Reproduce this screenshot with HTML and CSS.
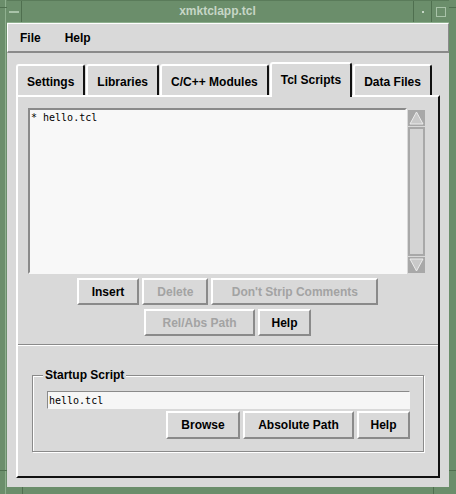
FILE: index.html
```html
<!DOCTYPE html>
<html lang="en">
<head>
  <meta charset="UTF-8">
  <meta name="viewport" content="width=device-width, initial-scale=1">
  <title>xmktclapp.tcl</title>
  <link rel="stylesheet" href="styles.css">
</head>
<body>

<div class="window">
  <div class="titlebar">
    <div class="tb-btn tb-menu"><span class="dash"></span></div>
    <div class="title">xmktclapp.tcl</div>
    <div class="tb-btn tb-min"><span class="dot"></span></div>
    <div class="tb-btn tb-max"><span class="box"></span></div>
  </div>

  <div class="client">
    <div class="menubar">
      <span>File</span>
      <span>Help</span>
    </div>

    <div class="notebook">
      <div class="tabs">
        <div class="tab">Settings</div>
        <div class="tab">Libraries</div>
        <div class="tab">C/C++ Modules</div>
        <div class="tab active">Tcl Scripts</div>
        <div class="tab">Data Files</div>
      </div>

      <div class="panel">
        <div class="scripts">
          <div class="listwrap">
            <div class="listbox">* hello.tcl</div>
            <div class="scrollbar">
              <svg class="arrow" width="17" height="16" viewBox="0 0 17 16">
                <rect width="17" height="16" fill="#a8a8a8"/>
                <polygon points="8.5,2 15,14 2,14" fill="#c9c9c9" stroke="#ececec" stroke-width="1"/>
              </svg>
              <div class="thumb"></div>
              <svg class="arrow" width="17" height="16" viewBox="0 0 17 16">
                <rect width="17" height="16" fill="#a8a8a8"/>
                <polygon points="2,2 15,2 8.5,14" fill="#c9c9c9" stroke="#ececec" stroke-width="1"/>
              </svg>
            </div>
          </div>

          <div class="btnrow">
            <button class="btn">Insert</button>
            <button class="btn" disabled>Delete</button>
            <button class="btn wide" disabled>Don't Strip Comments</button>
          </div>
          <div class="btnrow">
            <button class="btn path" disabled>Rel/Abs Path</button>
            <button class="btn help">Help</button>
          </div>
        </div>

        <div class="startup">
          <fieldset class="group">
            <legend>Startup Script</legend>
            <input class="entry" type="text" value="hello.tcl">
            <div class="btnrow right">
              <button class="btn browse">Browse</button>
              <button class="btn path">Absolute Path</button>
              <button class="btn help">Help</button>
            </div>
          </fieldset>
        </div>
      </div>
    </div>
  </div>
</div>

</body>
</html>
```

FILE: styles.css
```css
* {
  box-sizing: border-box;
  margin: 0;
  padding: 0;
}

body {
  font-family: 'Liberation Sans', Arial, sans-serif;
  font-size: 12px;
  font-weight: bold;
  background: #6b8e6b;
}

/* window manager frame, with the little resize-corner ticks */
.window {
  width: 456px;
  height: 494px;
  padding: 0 7px 7px;
  display: flex;
  flex-direction: column;
  background:
    linear-gradient(#4f6f4f, #4f6f4f) 0 7px / 7px 1px no-repeat,
    linear-gradient(#4f6f4f, #4f6f4f) 449px 7px / 7px 1px no-repeat,
    linear-gradient(#4f6f4f, #4f6f4f) 0 470px / 7px 1px no-repeat,
    linear-gradient(#4f6f4f, #4f6f4f) 449px 470px / 7px 1px no-repeat,
    linear-gradient(#4f6f4f, #4f6f4f) 22px 487px / 1px 7px no-repeat,
    linear-gradient(#4f6f4f, #4f6f4f) 433px 487px / 1px 7px no-repeat,
    linear-gradient(#8fb08f, #8fb08f) 5px 0 / 1px 100% no-repeat,
    #6b8e6b;
}

.titlebar {
  height: 23px;
  display: flex;
  border-top: 1px solid #5a7b5a;
  border-bottom: 1px solid #8fb08f;
}

.tb-btn {
  width: 15px;
  display: flex;
  align-items: center;
  justify-content: center;
}

.tb-menu {
  border-right: 1px solid #4f6f4f;
}

.tb-min,
.tb-max {
  width: 18px;
  border-left: 1px solid #4f6f4f;
}

.dash {
  width: 10px;
  height: 2px;
  background: #a9c3a9;
}

.dot {
  width: 2px;
  height: 2px;
  background: #c6d6c6;
}

.box {
  width: 10px;
  height: 10px;
  border: 1px solid #a9c3a9;
}

.title {
  flex: 1;
  text-align: center;
  line-height: 21px;
  color: #c6d6c6;
  font-size: 12px;
}

/* application area */
.client {
  flex: 1;
  background: #d9d9d9;
  display: flex;
  flex-direction: column;
}

.menubar {
  height: 30px;
  display: flex;
  align-items: center;
  border-top: 1px solid #fff;
  border-left: 1px solid #fff;
  border-right: 1px solid #8a8a8a;
  border-bottom: 2px solid #8a8a8a;
}

.menubar span {
  padding: 0 12px;
}

.notebook {
  flex: 1;
  padding: 9px;
  display: flex;
  flex-direction: column;
}

.tabs {
  height: 33px;
  display: flex;
  align-items: flex-end;
  gap: 1px;
}

.tab {
  height: 31px;
  padding: 9px 9px 0;
  line-height: 14px;
  border: 2px solid #fff;
  border-right-color: #111;
  border-bottom: 0;
  border-radius: 3px 3px 0 0;
  background: #d9d9d9;
}

.tab.active {
  height: 35px;
  margin-bottom: -2px;
  position: relative;
  z-index: 1;
}

.panel {
  flex: 1;
  display: flex;
  flex-direction: column;
  border: 2px solid #fff;
  border-right-color: #111;
  border-bottom-color: #111;
}

.scripts {
  padding: 11px 11px 8px 10px;
  border-bottom: 1px solid #8a8a8a;
}

.listwrap {
  height: 166px;
  display: flex;
}

.listbox {
  flex: 1;
  padding: 2px 0 0 1px;
  background: #f8f8f8;
  border: 2px solid;
  border-color: #8a8a8a #f8f8f8 #f8f8f8 #8a8a8a;
  font-family: 'DejaVu Sans Mono', monospace;
  font-size: 10px;
  font-weight: normal;
}

.scrollbar {
  width: 20px;
  padding: 2px 2px 1px 1px;
  display: flex;
  flex-direction: column;
}

.arrow {
  display: block;
}

.thumb {
  flex: 1;
  margin: 1px 0;
  border: 2px solid #a8a8a8;
  background: #d4d4d4;
}

.btnrow {
  display: flex;
  justify-content: center;
  gap: 3px;
  margin-top: 4px;
}

.btn {
  height: 27px;
  padding: 0 13px;
  border: 2px solid;
  border-color: #fff #8a8a8a #8a8a8a #fff;
  background: #d9d9d9;
  font: inherit;
  color: #000;
}

.btn:disabled {
  color: #a3a3a3;
}

.btn.wide {
  width: 167px;
}

.btn.path {
  width: 111px;
}

.btn.help {
  width: 53px;
  padding: 0;
}

.btn.browse {
  width: 74px;
  padding: 0;
}

.startup {
  flex: 1;
  border-top: 1px solid #fff;
  padding: 22px 14px 0;
}

.group {
  border: 1px solid #8a8a8a;
  box-shadow: inset 1px 1px 0 #fff, 1px 1px 0 #fff;
  padding: 9px 13px 12px 14px;
}

.group legend {
  padding: 0 2px;
  margin-left: -4px;
  line-height: 14px;
  background: #d9d9d9;
}

.entry {
  display: block;
  width: 100%;
  height: 18px;
  padding-left: 1px;
  border: 1px solid;
  border-color: #8a8a8a #f6f6f6 #f6f6f6 #8a8a8a;
  background: #f6f6f6;
  font-family: 'DejaVu Sans Mono', monospace;
  font-size: 10px;
  color: #000;
  outline: none;
}

.btnrow.right {
  justify-content: flex-end;
  margin-top: 2px;
}

.btnrow.right .btn {
  height: 28px;
}
```
